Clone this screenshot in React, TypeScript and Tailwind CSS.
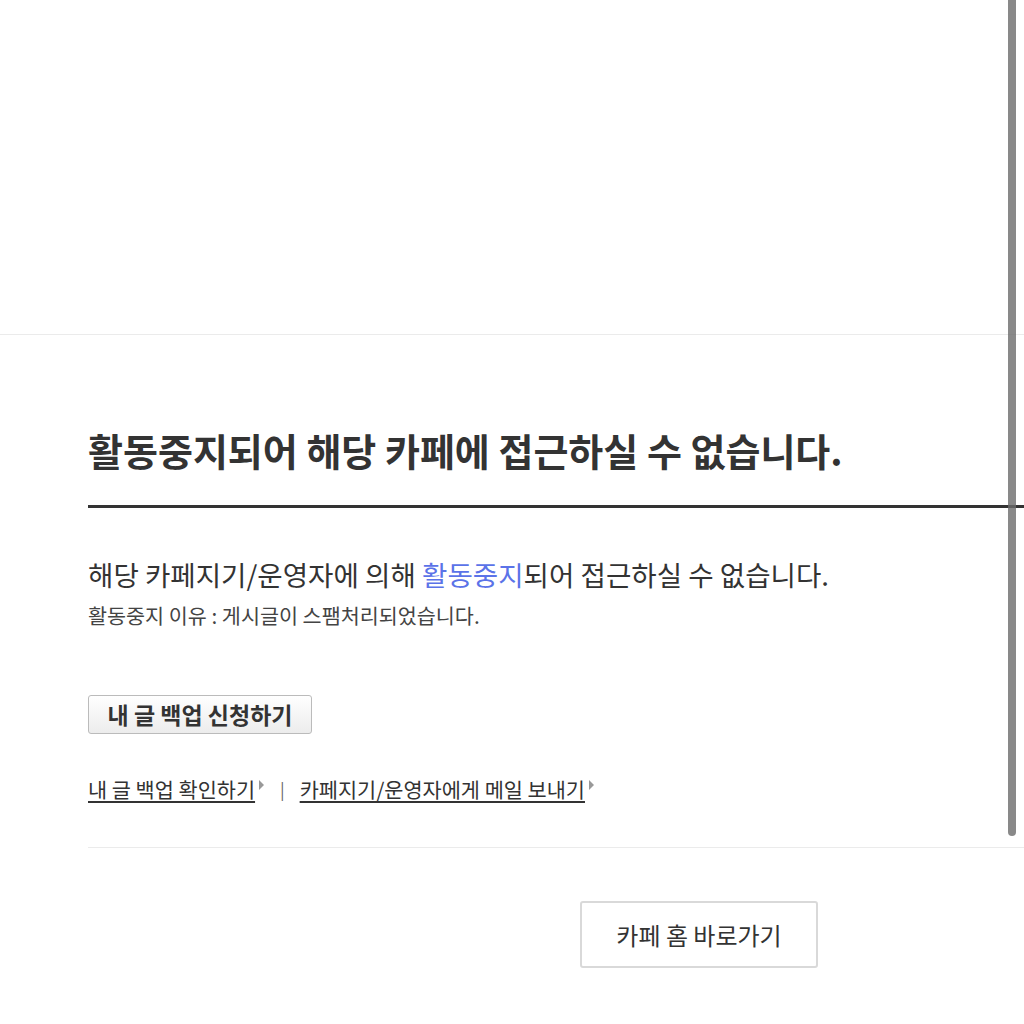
import React from 'react';

const font = { fontFamily: '"Noto Sans CJK KR", "Noto Sans", sans-serif' };

const Arrow: React.FC = () => (
  <span className="inline-block ml-[4px] self-start mt-[5px] w-0 h-0 border-y-[5px] border-y-transparent border-l-[5px] border-l-[#999]" />
);

export default function App() {
  return (
    <div className="relative min-h-screen bg-white text-[#333] overflow-hidden" style={font}>
      <div className="h-[334px]" />
      <div className="border-t border-[#ebebeb] pl-[88px]">
        <h1 className="pt-[93px] text-[38px] leading-[44px] font-bold text-[#333]">
          활동중지되어 해당 카페에 접근하실 수 없습니다.
        </h1>
        <div className="mt-[33px] h-[3px] bg-[#333]" />

        <p className="mt-[49px] text-[27.6px] leading-[34px] text-[#333]">
          해당 카페지기/운영자에 의해 <span className="text-[#5b73e8]">활동중지</span>되어 접근하실 수 없습니다.
        </p>
        <p className="mt-[10px] text-[20.7px] leading-[28px] text-[#444]">
          활동중지 이유 : 게시글이 스팸처리되었습니다.
        </p>

        <button className="mt-[66px] block w-[224px] h-[39px] rounded-[3px] border border-[#bbb] bg-gradient-to-b from-white to-[#ececec] text-[23px] font-bold text-[#333] leading-none">
          내 글 백업 신청하기
        </button>

        <div className="mt-[41px] flex items-center text-[20.8px] leading-[28px] text-[#333]">
          <a href="#" className="underline underline-offset-[3px]">내 글 백업 확인하기</a>
          <Arrow />
          <span className="ml-[16px] mr-[15px] text-[#666] text-[17px]">|</span>
          <a href="#" className="underline underline-offset-[3px]">카페지기/운영자에게 메일 보내기</a>
          <Arrow />
        </div>

        <div className="mt-[44px] h-px bg-[#ebebeb]" />

        <div className="pt-[53px] pl-[492px]">
          <button className="w-[238px] h-[67px] rounded-[3px] border-2 border-[#d9d9d9] bg-white text-[24px] text-[#333]">
            카페 홈 바로가기
          </button>
        </div>
      </div>

      <div className="absolute top-0 right-[8px] w-[8px] h-[836px] rounded-b-full bg-[#6b6b6b]/80" />
    </div>
  );
}
